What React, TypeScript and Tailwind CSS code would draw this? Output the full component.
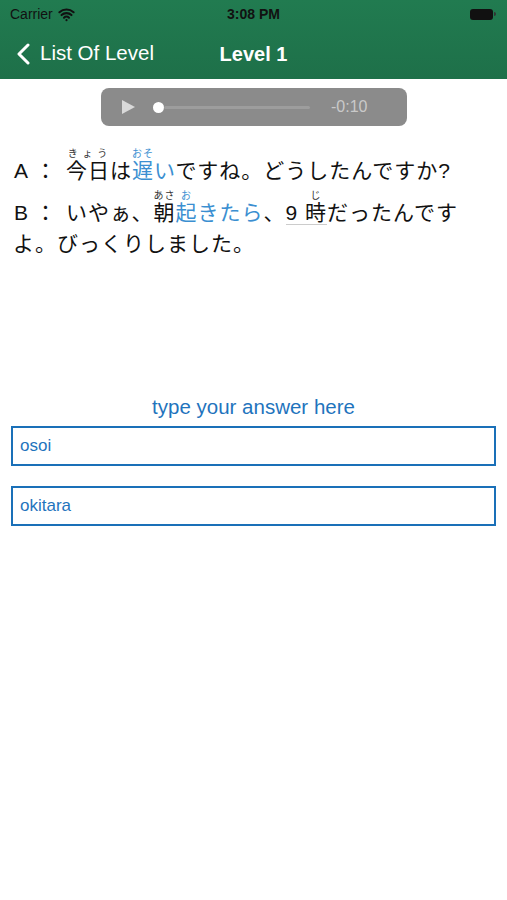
import React from "react";
import { Wifi } from "lucide-react";

const jp = { fontFamily: '"Liberation Sans", "Noto Sans CJK JP", sans-serif' };

const Ruby = ({ base, top, blue }: { base: string; top: string; blue?: boolean }) => (
  <ruby className={blue ? "text-[#3b8fd1]" : ""}>
    {base}
    <rt
      className="text-[10px] leading-[12px] tracking-[1px]"
      style={{ color: blue ? "#3b8fd1" : "#333" }}
    >
      {top}
    </rt>
  </ruby>
);

export default function App() {
  return (
    <div className="w-[507px] h-[900px] bg-white overflow-hidden" style={jp}>
      {/* Header */}
      <div className="bg-gradient-to-b from-[#217b50] to-[#1e7049] h-[79px] text-white">
        <div className="h-[28px] flex items-center justify-between px-[10px] text-[#111]">
          <div className="flex items-center gap-[5px] w-[120px]">
            <span className="text-[14px]">Carrier</span>
            <Wifi size={17} strokeWidth={3} />
          </div>
          <span className="text-[14px] font-semibold">3:08 PM</span>
          <div className="w-[120px] flex justify-end pr-[1px]">
            <div className="flex items-center">
              <div className="w-[23px] h-[11px] rounded-[3px] bg-[#111]" />
              <div className="w-[1.5px] h-[4px] bg-[#333] ml-[1px] rounded-r" />
            </div>
          </div>
        </div>
        <div className="relative h-[51px] flex items-center">
          <div className="flex items-center pl-[15px] gap-[9px]">
            <svg width="16" height="22" viewBox="0 0 16 22" fill="none">
              <path d="M13 2 L4 11 L13 20" stroke="white" strokeWidth="3" strokeLinecap="round" strokeLinejoin="round" />
            </svg>
            <span className="text-[20.5px]">List Of Level</span>
          </div>
          <span className="absolute left-1/2 -translate-x-1/2 text-[20px] font-bold">Level 1</span>
        </div>
      </div>

      {/* Player */}
      <div className="flex justify-center pt-[9px]">
        <div className="w-[306px] h-[38px] rounded-[8px] bg-[#8b8b8b] flex items-center pl-[20px] pr-[39px] gap-[17px]">
          <svg width="15" height="16" viewBox="0 0 15 16">
            <path d="M1 1 L14 8 L1 15 Z" fill="#d9d9d9" />
          </svg>
          <div className="flex-1 flex items-center pr-[4px]">
            <div className="w-[11px] h-[11px] rounded-full bg-white" />
            <div className="flex-1 h-[3px] bg-[#9d9d9d] rounded" />
          </div>
          <span className="text-[16px] text-[#c9c9c9]">-0:10</span>
        </div>
      </div>

      {/* Dialogue */}
      <div className="px-[13px] pt-[22px] text-[21px] leading-[31px] tracking-[1px] text-[#111]">
        <div>
          <span className="inline-block w-[53px] tracking-normal">
            <span className="inline-block w-[22px] pl-[1px]">A</span>
            <span>：</span>
          </span>
          <Ruby base="今日" top="きょう" />は<Ruby base="遅" top="おそ" blue />
          <span className="text-[#3b8fd1]">い</span>ですね。どうしたんですか?
        </div>
        <div className="mt-[4px]">
          <span className="inline-block w-[53px] tracking-normal">
            <span className="inline-block w-[22px] pl-[1px]">B</span>
            <span>：</span>
          </span>
          いやぁ、<Ruby base="朝" top="あさ" /><Ruby base="起" top="お" blue />
          <span className="text-[#3b8fd1]">きたら</span>、
          <span className="border-b border-[#ccc] leading-[22px] inline-block">
            9 <Ruby base="時" top="じ" />
          </span>
          だったんです
        </div>
        <div>よ。びっくりしました。</div>
      </div>

      {/* Answers */}
      <div className="pt-[135px] px-[11px] flex flex-col">
        <p className="text-center text-[20.5px] text-[#1f74bd] leading-[26px]">type your answer here</p>
        <div className="mt-[6px] h-[40px] border-2 border-[#1a70b8] flex items-center px-[7px] text-[17px] text-[#1f74bd]">
          osoi
        </div>
        <div className="mt-[20px] h-[40px] border-2 border-[#1a70b8] flex items-center px-[7px] text-[17px] text-[#1f74bd]">
          okitara
        </div>
      </div>
    </div>
  );
}
